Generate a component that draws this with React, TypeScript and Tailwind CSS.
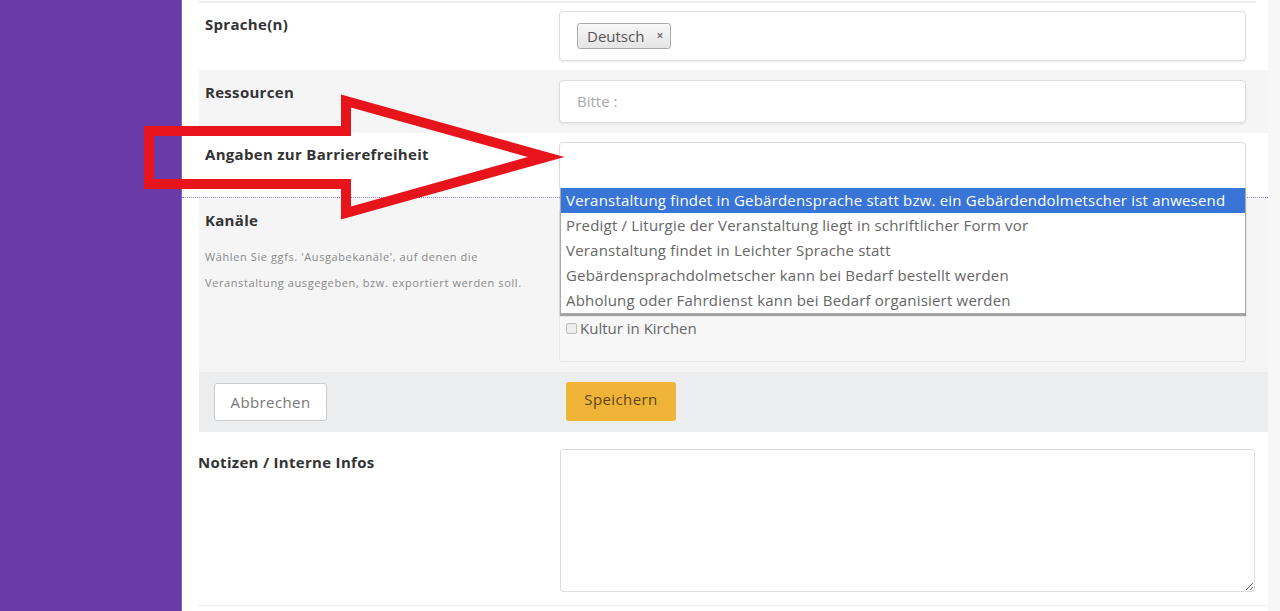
import React from 'react';

const OPTIONS = [
    'Veranstaltung findet in Gebärdensprache statt bzw. ein Gebärdendolmetscher ist anwesend',
    'Predigt / Liturgie der Veranstaltung liegt in schriftlicher Form vor',
    'Veranstaltung findet in Leichter Sprache statt',
    'Gebärdensprachdolmetscher kann bei Bedarf bestellt werden',
    'Abholung oder Fahrdienst kann bei Bedarf organisiert werden',
];

const label = "text-[15px] font-bold tracking-[0.3px] text-[#333] font-['Open_Sans',sans-serif]";
const input = 'rounded-[4px] border border-[#dcdcdc] bg-white shadow-[0_1px_2px_rgba(0,0,0,0.08)]';

export default function App() {
    return (
        <div className="relative flex h-[611px] w-[1280px] overflow-hidden bg-white font-['Open_Sans',sans-serif]">
            <aside className="w-[182px] shrink-0 bg-[#6a3aa8] border-r border-[#8a64c4]" />

            <main className="flex flex-1 flex-col pr-[12px]">
                <div className="ml-[17px] mr-[12px] h-[3px] border-b-2 border-[#eeeeee]" />

                {/* Sprache(n) */}
                <div className="ml-[17px] flex h-[67px]">
                    <div className={`w-[360px] pl-[6px] pt-[10px] ${label}`}>Sprache(n)</div>
                    <div className={`mt-[8px] h-[50px] w-[687px] ${input} px-[17px] pt-[11px]`}>
                        <span className="inline-flex h-[26px] items-center gap-[12px] rounded-[3px] border border-[#aaaaaa] bg-gradient-to-b from-[#f8f8f8] to-[#e4e4e4] pl-[9px] pr-[7px] text-[15px] text-[#555]">
                            Deutsch
                            <span className="text-[12px] font-bold text-[#777]">×</span>
                        </span>
                    </div>
                </div>

                {/* Ressourcen */}
                <div className="ml-[17px] flex h-[63px] bg-[#f5f5f5]">
                    <div className={`w-[360px] pl-[6px] pt-[11px] ${label}`}>Ressourcen</div>
                    <div className={`mt-[10px] h-[43px] w-[687px] ${input} px-[17px] pt-[9px] text-[15px] text-[#aaa]`}>
                        Bitte :
                    </div>
                </div>

                {/* Angaben zur Barrierefreiheit */}
                <div className="ml-[17px] flex h-[64px]">
                    <div className={`w-[360px] pl-[6px] pt-[10px] ${label}`}>Angaben zur Barrierefreiheit</div>
                    <div className="relative mt-[9px] w-[687px]">
                        <div className={`h-[48px] ${input}`} />
                        <ul className="absolute left-[1px] top-[46px] z-10 w-[686px] border border-[#aaaaaa] border-t-0 bg-white shadow-[0_2px_1px_rgba(0,0,0,0.35)] text-[15px] tracking-[0.2px] text-[#666]">
                            {OPTIONS.map((o, i) => (
                                <li
                                    key={o}
                                    className={`h-[25px] px-[5px] leading-[25px] whitespace-nowrap ${i === 0 ? 'bg-[#3875d7] text-white' : ''}`}
                                >
                                    {o}
                                </li>
                            ))}
                        </ul>
                    </div>
                </div>

                {/* Kanäle */}
                <div className="border-t border-dotted border-[#8f82c4]">
                    <div className="ml-[17px] flex h-[174px] bg-[#f5f5f5]">
                        <div className="w-[360px] pl-[6px] pt-[11px]">
                            <div className={label}>Kanäle</div>
                            <p className="mt-[12px] text-[11px] leading-[26px] tracking-[0.6px] text-[#888]">
                                Wählen Sie ggfs. 'Ausgabekanäle', auf denen die
                                <br />
                                Veranstaltung ausgegeben, bzw. exportiert werden soll.
                            </p>
                        </div>
                        <div className="mt-[10px] h-[154px] w-[687px] rounded-[3px] border border-[#e6e6e6] bg-[#f7f7f7] pl-[6px] pt-[108px]">
                            <label className="flex items-center gap-[3px] text-[15px] text-[#666]">
                                <span className="h-[11px] w-[11px] rounded-[2px] border border-[#bbb] bg-[#eee]" />
                                Kultur in Kirchen
                            </label>
                        </div>
                    </div>
                </div>

                {/* Buttons */}
                <div className="ml-[17px] flex h-[60px] bg-[#ebedef]">
                    <div className="w-[360px] pl-[15px] pt-[11px]">
                        <button className="h-[38px] w-[113px] rounded-[3px] border border-[#cccccc] bg-white text-[15px] tracking-[0.4px] text-[#777]">
                            Abbrechen
                        </button>
                    </div>
                    <div className="pl-[7px] pt-[10px]">
                        <button className="h-[39px] w-[110px] rounded-[3px] bg-[#efb338] pb-[4px] text-[15px] tracking-[0.4px] text-[#5c4814]">
                            Speichern
                        </button>
                    </div>
                </div>

                {/* Notizen */}
                <div className="ml-[16px] flex h-[174px] border-b border-[#eeeeee]">
                    <div className={`w-[362px] pt-[19px] ${label}`}>Notizen / Interne Infos</div>
                    <textarea className="mt-[17px] h-[143px] w-[695px] resize rounded-[3px] border border-[#dcdcdc] bg-white outline-none" />
                </div>
            </main>

            <div className="absolute right-0 top-0 h-full w-[12px] bg-[#f7f7f7]" />

            {/* red annotation arrow */}
            <svg className="pointer-events-none absolute left-0 top-0 z-20" width="1280" height="611">
                <polygon
                    points="149,131 346,131 346,101 546,157 346,213 346,184 149,184"
                    fill="none"
                    stroke="#e8141c"
                    strokeWidth="10"
                    strokeLinejoin="miter"
                />
            </svg>
        </div>
    );
}
